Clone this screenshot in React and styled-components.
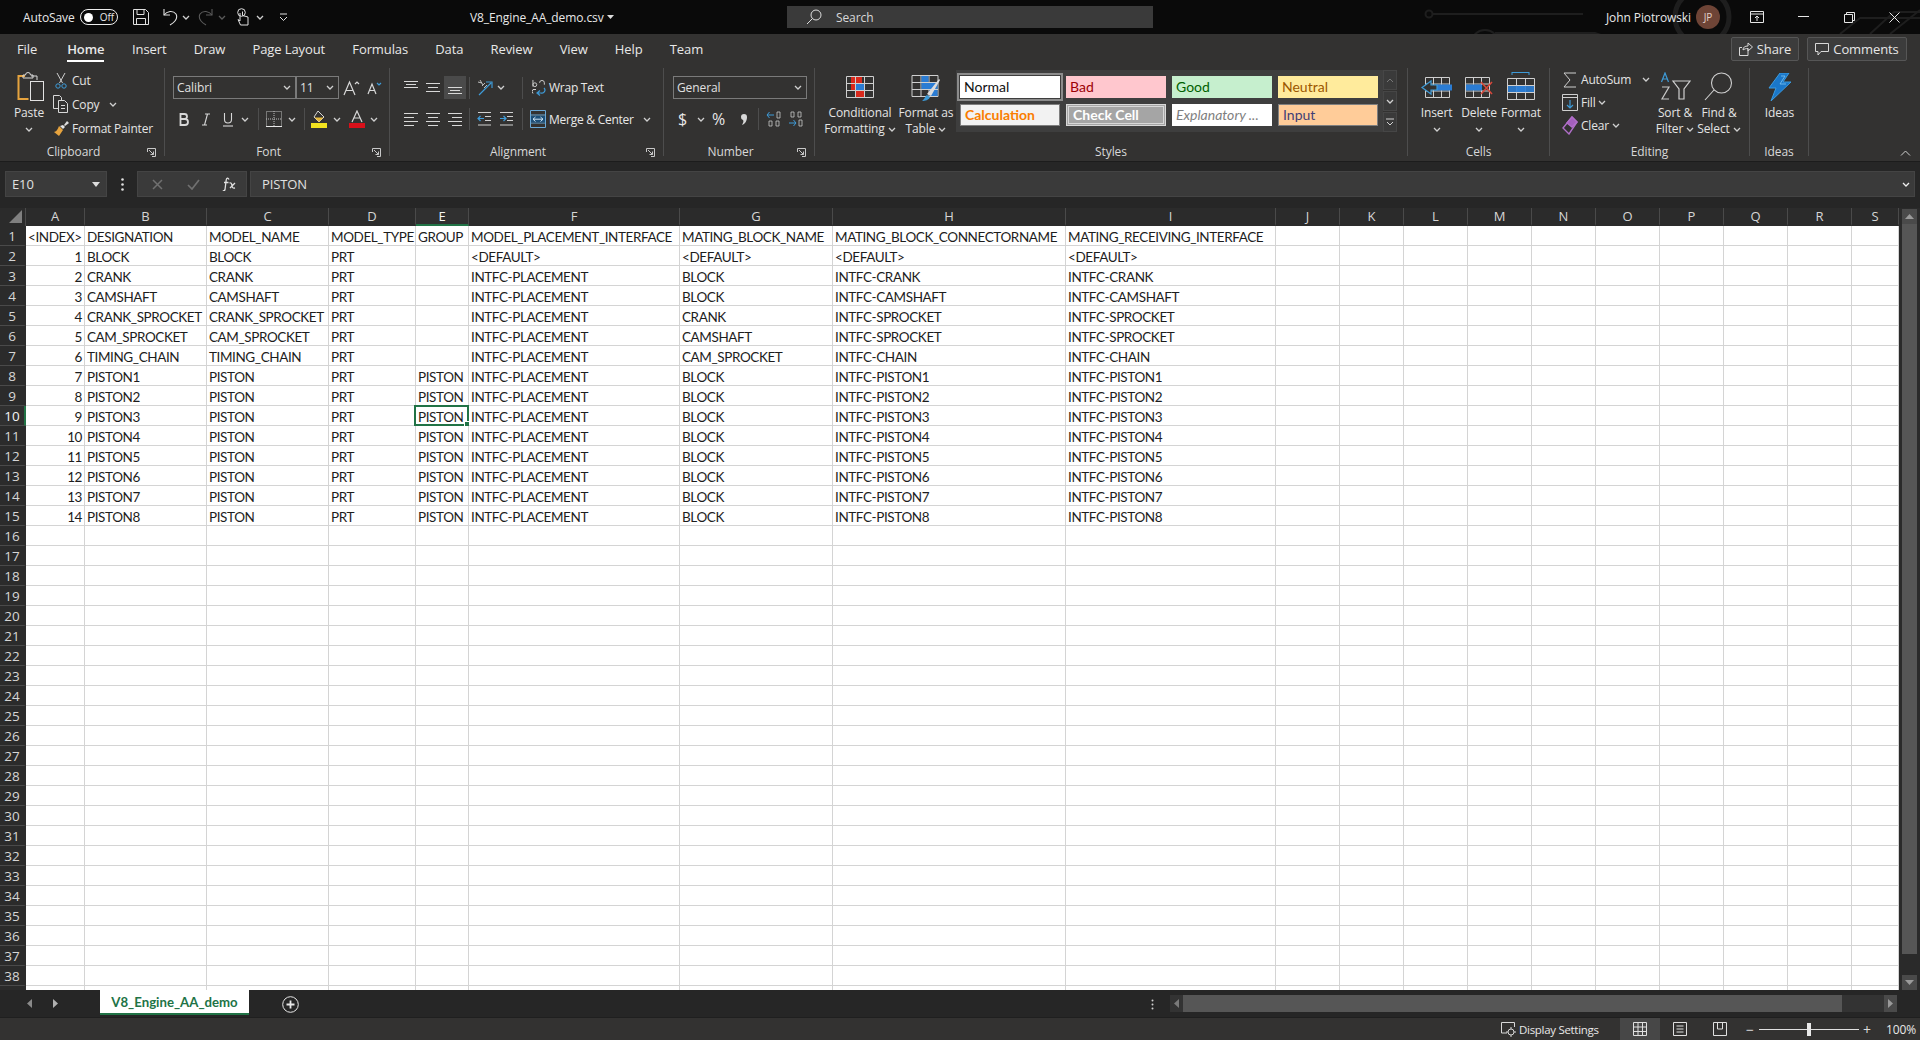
import React from 'react';
import styled, { createGlobalStyle } from 'styled-components';

const UI_FONT = '"Open Sans", "Noto Sans", sans-serif';
const CELL_FONT = 'Lato, "Liberation Sans", sans-serif';

const GlobalStyle = createGlobalStyle`
  html, body { margin: 0; padding: 0; background: #333231; }
  body { font-family: ${UI_FONT}; color: #e6e6e6; }
  * { box-sizing: border-box; }
  svg { display: block; flex: none; }
`;

const Page = styled.div`
  width: 1920px;
  height: 1040px;
  display: flex;
  flex-direction: column;
  overflow: hidden;
`;

/* title bar */
const TitleBar = styled.div`
  position: relative;
  height: 34px;
  flex: none;
  display: flex;
  align-items: center;
  padding-left: 23px;
  background: #0a0a0a;
  font-size: 12px;
  letter-spacing: -0.1px;
  overflow: hidden;
`;
const TitleArt = styled.svg`
  position: absolute;
  left: 1400px;
  top: 0;
`;
const TitleText = styled.span`
  position: relative;
  flex: none;
  width: ${p => p.$w}px;
  margin-left: ${p => p.$ml || 0}px;
  font-size: ${p => p.$fs || 12}px;
  letter-spacing: -0.1px;
  white-space: nowrap;
  color: #e8e8e8;
`;
const Toggle = styled.div`
  position: relative;
  flex: none;
  width: 38px;
  height: 16px;
  border: 1px solid #eee;
  border-radius: 8px;
  display: flex;
  align-items: center;
  padding: 0 3px 0 3px;
  justify-content: space-between;
  font-size: 10px;
  line-height: 1;
  &::before {
    content: '';
    width: 9px;
    height: 9px;
    border-radius: 50%;
    background: #fff;
  }
`;
const Slot = styled.div`
  position: relative;
  flex: none;
  width: ${p => p.$w}px;
  margin-left: ${p => p.$ml || 0}px;
  display: flex;
  align-items: center;
  justify-content: center;
`;
const SearchBox = styled.div`
  position: relative;
  flex: none;
  width: 366px;
  height: 22px;
  margin-left: ${p => p.$ml}px;
  background: #3a3a3a;
  display: flex;
  align-items: center;
  gap: 14px;
  padding-left: 19px;
  color: #d8d8d8;
`;
const Avatar = styled.div`
  position: relative;
  flex: none;
  width: 24px;
  height: 24px;
  margin-left: 11px;
  border-radius: 50%;
  background: #6e4436;
  color: #e0cfc8;
  font-size: 10px;
  display: flex;
  align-items: center;
  justify-content: center;
`;

/* ribbon */
const Ribbon = styled.div`
  height: 128px;
  flex: none;
  background: #333231;
  border-bottom: 1px solid #1c1c1c;
`;
const TabRow = styled.div`
  height: 32px;
  display: flex;
  align-items: flex-start;
  padding: 7px 13px 0 12px;
`;
const RibbonTab = styled.div`
  position: relative;
  height: 21px;
  padding: 0 ${p => p.$pad || 13.6}px;
  margin-left: ${p => p.$ml || 0}px;
  font-size: 13px;
  line-height: 17px;
  letter-spacing: -0.1px;
  color: #e8e8e8;
  font-weight: ${p => (p.$active ? 600 : 400)};
  &::after {
    content: '';
    display: ${p => (p.$active ? 'block' : 'none')};
    position: absolute;
    left: 14px;
    right: 14px;
    bottom: 0;
    height: 2px;
    background: #fff;
  }
`;
const TopButtons = styled.div`
  margin-left: auto;
  display: flex;
  gap: 8px;
  margin-top: -4px;
`;
const TopButton = styled.div`
  width: ${p => p.$w}px;
  height: 24px;
  background: #3c3c3c;
  border: 1px solid #565656;
  border-radius: 2px;
  display: flex;
  align-items: center;
  justify-content: center;
  gap: 4px;
  font-size: 13px;
  letter-spacing: -0.1px;
`;
const Groups = styled.div`
  display: flex;
  margin-top: 2px;
`;
const Group = styled.div`
  width: ${p => p.$w}px;
  height: 88px;
  flex: none;
  display: flex;
  flex-direction: column;
  border-right: ${p => (p.$last ? 'none' : '1px solid #4d4d4d')};
`;
const GroupBody = styled.div`
  height: 76px;
  display: flex;
  flex-direction: ${p => (p.$column ? 'column' : 'row')};
  padding-top: ${p => (p.$column ? 8 : 0)}px;
`;
const GroupLabel = styled.div`
  height: 12px;
  display: flex;
  font-size: 12px;
  line-height: 16px;
  color: #d8d8d8;
  letter-spacing: -0.1px;
`;
const LabelText = styled.span`
  flex: 1;
  text-align: center;
  white-space: nowrap;
`;
const Launcher = styled.span`
  width: 17px;
  flex: none;
  padding-top: 4px;
`;
const Row = styled.div`
  display: flex;
  align-items: center;
  height: ${p => p.$h || 24}px;
  padding-left: ${p => p.$pl || 0}px;
  margin-bottom: ${p => p.$mb || 0}px;
`;
const Divider = styled.div`
  flex: none;
  width: 1px;
  height: 22px;
  background: #4d4d4d;
  margin-left: ${p => p.$ml || 0}px;
  margin-right: ${p => p.$mr || 0}px;
`;
const Combo = styled.div`
  flex: none;
  width: ${p => p.$w}px;
  height: 23px;
  border: 1px solid #7a7a7a;
  margin-left: ${p => p.$ml || 0}px;
  display: flex;
  align-items: center;
  justify-content: space-between;
  padding: 0 4px 0 3px;
  font-size: 12px;
  letter-spacing: -0.1px;
  color: #e0e0e0;
`;
const ToolSlot = styled(Slot)`
  height: 23px;
  background: ${p => (p.$on ? '#4a4a4a' : 'transparent')};
`;
const ToolLabel = styled(TitleText)`
  letter-spacing: -0.25px;
`;
const TallButton = styled.div`
  flex: none;
  width: ${p => p.$w}px;
  margin-left: ${p => p.$ml || 0}px;
  display: flex;
  flex-direction: column;
  align-items: center;
  font-size: 12px;
  line-height: 16px;
  letter-spacing: -0.1px;
  color: #e4e4e4;
`;
const TallIcon = styled.div`
  height: 37px;
  display: flex;
  align-items: center;
  justify-content: center;
  margin-left: ${p => p.$ml || 0}px;
`;
const Line = styled.div`
  height: 16px;
  display: flex;
  align-items: center;
  gap: 3px;
  white-space: nowrap;
`;
const SmallColumn = styled.div`
  flex: none;
  width: ${p => p.$w}px;
  margin-left: ${p => p.$ml || 0}px;
  display: flex;
  flex-direction: column;
`;
const SmallRow = styled.div`
  height: ${p => p.$h || 24}px;
  display: flex;
  align-items: center;
  font-size: 12px;
  letter-spacing: -0.2px;
  color: #e4e4e4;
  white-space: nowrap;
`;
const SmallIcon = styled.div`
  width: 16px;
  flex: none;
  margin-right: 3px;
  display: flex;
  justify-content: center;
`;
const Caret = styled.div`
  margin-left: ${p => p.$ml || 0}px;
`;
const Gallery = styled.div`
  flex: none;
  width: 427px;
  height: 62px;
  margin: 2px 0 0 9px;
  padding: 6px 0 0 4px;
  background: #3e3e3e;
  display: grid;
  grid-template-columns: repeat(4, 100px);
  grid-template-rows: 22px 22px;
  gap: 6px;
`;
const StyleCell = styled.div`
  display: flex;
  align-items: center;
  padding: 0 0 2px 4px;
  font-family: ${CELL_FONT};
  font-size: 14px;
  white-space: nowrap;
  overflow: hidden;
  background: ${p => p.$bg};
  color: ${p => p.$fg};
  font-weight: ${p => (p.$bold ? 700 : 400)};
  font-style: ${p => (p.$italic ? 'italic' : 'normal')};
  border: ${p => p.$border || 'none'};
  outline: ${p => (p.$picked ? '2px solid #8c8c8c' : 'none')};
  outline-offset: 1px;
`;
const GalleryScroll = styled.div`
  flex: none;
  width: 14px;
  height: 62px;
  margin-top: 2px;
  display: flex;
  flex-direction: column;
  gap: 1px;
`;
const GalleryButton = styled.div`
  flex: 1;
  background: #3a3a3a;
  border: 1px solid #464646;
  display: flex;
  align-items: center;
  justify-content: center;
`;
const Collapse = styled.div`
  flex: 1;
  display: flex;
  justify-content: flex-end;
  align-items: flex-end;
  padding: 0 9px 0 0;
`;

/* formula bar */
const FormulaBar = styled.div`
  height: 46px;
  flex: none;
  background: #262626;
  display: flex;
  align-items: flex-start;
  padding: 9px 5px 0 5px;
  font-size: 13px;
  letter-spacing: -0.1px;
  color: #e0e0e0;
`;
const NameBox = styled.div`
  width: 102px;
  height: 26px;
  flex: none;
  background: #3a3a3a;
  border: 1px solid #444;
  display: flex;
  align-items: center;
  justify-content: space-between;
  padding: 0 6px;
`;
const Kebab = styled.div`
  width: 30px;
  height: 26px;
  flex: none;
  display: flex;
  align-items: center;
  justify-content: center;
`;
const FxBox = styled.div`
  width: 110px;
  height: 26px;
  flex: none;
  background: #3a3a3a;
  border: 1px solid #444;
  display: grid;
  grid-template-columns: 36px 36px 36px;
  padding-left: 1px;
  align-items: center;
  justify-items: center;
`;
const FormulaInput = styled.div`
  flex: 1;
  height: 26px;
  margin-left: 3px;
  background: #3a3a3a;
  border: 1px solid #444;
  display: flex;
  align-items: center;
  justify-content: space-between;
  padding: 0 4px 0 11px;
`;

/* sheet */
const SheetArea = styled.div`
  height: 782px;
  flex: none;
  display: flex;
  background: #262626;
`;
const Sheet = styled.div`
  width: 1899px;
  height: 782px;
  flex: none;
  overflow: hidden;
  display: grid;
  grid-template-columns: 26px 59px 122px 122px 87px 53px 211px 153px 233px 210px repeat(9, 64px) 47px;
  grid-template-rows: 18px;
  grid-auto-rows: 20px;
`;
const Corner = styled.div`
  background: #2b2b2b;
  border-right: 1px solid #4a4a4a;
  display: flex;
  align-items: flex-end;
  justify-content: flex-end;
  padding: 0 3px 3px 0;
`;
const ColHead = styled.div`
  background: ${p => (p.$sel ? '#303030' : '#2b2b2b')};
  border-right: 1px solid #4a4a4a;
  border-bottom: 2px solid ${p => (p.$sel ? '#217346' : '#2b2b2b')};
  display: flex;
  align-items: center;
  justify-content: center;
  padding-top: 1px;
  font-size: 13px;
  line-height: 1;
  color: ${p => (p.$sel ? '#f4f4f4' : '#d6d6d6')};
`;
const RowHead = styled.div`
  background: ${p => (p.$sel ? '#303030' : '#2b2b2b')};
  border-bottom: 1px solid #4a4a4a;
  border-right: 2px solid ${p => (p.$sel ? '#217346' : '#2b2b2b')};
  display: flex;
  align-items: center;
  justify-content: center;
  font-size: 13.5px;
  color: ${p => (p.$sel ? '#f4f4f4' : '#d6d6d6')};
`;
const Cell = styled.div`
  position: relative;
  background: #fff;
  border-right: 1px solid #d4d4d4;
  border-bottom: 1px solid #d4d4d4;
  font-family: ${CELL_FONT};
  font-size: 13.5px;
  letter-spacing: -0.4px;
  line-height: 23px;
  color: #1d1d1d;
  padding: 0 ${p => (p.$num ? 2 : 1)}px 0 2px;
  text-align: ${p => (p.$num ? 'right' : 'left')};
  white-space: nowrap;
  &::before {
    content: '';
    display: ${p => (p.$sel ? 'block' : 'none')};
    position: absolute;
    left: -2px;
    top: -1px;
    right: -1px;
    bottom: -1px;
    border: 2px solid #217346;
  }
  &::after {
    content: '';
    display: ${p => (p.$sel ? 'block' : 'none')};
    position: absolute;
    right: -3px;
    bottom: -3px;
    width: 5px;
    height: 5px;
    background: #217346;
    border: 1px solid #fff;
  }
`;
const VScroll = styled.div`
  flex: 1;
  display: flex;
  flex-direction: column;
  align-items: center;
  padding-top: 1px;
  background: #2a2a2a;
`;
const ScrollButton = styled.div`
  width: 15px;
  height: 15px;
  flex: none;
  background: #4a4a4a;
  display: flex;
  align-items: center;
  justify-content: center;
`;
const VThumb = styled.div`
  width: 15px;
  height: 730px;
  flex: none;
  background: #565656;
  margin-bottom: auto;
`;

/* sheet tabs */
const TabBar = styled.div`
  height: 28px;
  flex: none;
  display: flex;
  background: #262626;
  border-bottom: 1px solid #1f1f1f;
`;
const SheetNav = styled.div`
  width: 100px;
  flex: none;
  display: flex;
  padding: 9px 0 0 27px;
  gap: 21px;
`;
const SheetTab = styled.div`
  width: 149px;
  height: 25px;
  flex: none;
  background: #fff;
  border-bottom: 2px solid #217346;
  color: #217346;
  font-family: ${CELL_FONT};
  font-weight: 700;
  font-size: 13.2px;
  display: flex;
  align-items: center;
  justify-content: center;
`;
const AddSheet = styled.div`
  margin: 6px 0 0 33px;
  flex: none;
`;
const TabDots = styled.div`
  margin: 9px 0 0 845px;
  width: 16px;
  flex: none;
  display: flex;
  justify-content: center;
`;
const HScroll = styled.div`
  width: 727px;
  height: 17px;
  margin: 5px 0 0 10px;
  flex: none;
  display: flex;
  align-items: center;
  background: #333;
`;
const HStart = styled.div`
  width: 13px;
  height: 100%;
  flex: none;
  display: flex;
  align-items: center;
  justify-content: center;
`;
const HThumb = styled.div`
  width: 659px;
  height: 100%;
  background: #565656;
`;
const HEnd = styled.div`
  margin-left: auto;
  width: 13px;
  height: 100%;
  background: #4a4a4a;
  display: flex;
  align-items: center;
  justify-content: center;
`;

/* status bar */
const StatusBar = styled.div`
  height: 22px;
  flex: none;
  background: #333231;
  display: flex;
  align-items: center;
  justify-content: flex-end;
  font-size: 12px;
  letter-spacing: -0.1px;
  color: #dcdcdc;
`;
const StatusText = styled(TitleText)`
  letter-spacing: -0.3px;
`;
const ViewButton = styled.div`
  width: 40px;
  height: 22px;
  flex: none;
  background: ${p => (p.$on ? '#474747' : 'transparent')};
  display: flex;
  align-items: center;
  justify-content: center;
`;
const ZoomSlider = styled.div`
  position: relative;
  width: 100px;
  height: 1px;
  flex: none;
  background: #e0e0e0;
  margin: 0 3px 0 4px;
  &::after {
    content: '';
    position: absolute;
    left: 48px;
    top: -6px;
    width: 4px;
    height: 13px;
    background: #e8e8e8;
  }
`;
const ZoomSign = styled.span`
  font-size: 14px;
  width: 10px;
  text-align: center;
  flex: none;
`;

const C = '#d8d8d8';
const BLUE = '#2b7cd3';
const LBLUE = '#3e9bd8';
const RED = '#d9291c';

const Chev = ({ color = '#d0d0d0' }) => (
  <svg width="8" height="5" viewBox="0 0 8 5"><path d="M1 1l3 3 3-3" fill="none" stroke={color} strokeWidth="1.3" /></svg>
);
const Launch = () => (
  <svg width="9" height="9" viewBox="0 0 9 9" fill="none" stroke="#c8c8c8"><path d="M.5 4V.5H8.5V8.5H5" /><path d="M2 2l4.5 4.5M6.5 3.5v3h-3" /></svg>
);
const Lines = ({ rows }) => (
  <svg width="16" height="15" viewBox="0 0 16 15" stroke={C}>
    {rows.map(([y, x1, x2]) => <path key={y} d={`M${x1} ${y}.5H${x2}`} />)}
  </svg>
);
const AT = [[1, 1, 15], [4, 3, 13], [7, 1, 15]];
const AM = [[3, 1, 15], [7, 3, 13], [11, 1, 15]];
const AB = [[7, 1, 15], [10, 3, 13], [13, 1, 15]];
const HL = [[1, 1, 15], [5, 1, 11], [9, 1, 15], [13, 1, 11]];
const HC = [[1, 1, 15], [5, 3, 13], [9, 1, 15], [13, 3, 13]];
const HR = [[1, 1, 15], [5, 5, 15], [9, 1, 15], [13, 5, 15]];

const PasteIcon = () => (
  <svg width="28" height="30" viewBox="0 0 28 30" fill="none">
    <path d="M8 4H1.500v23h10" stroke="#e6a33e" strokeWidth="2" />
    <path d="M14 4h6v4" stroke="#d8d8d8" />
    <path d="M6 6V3h2.500a2.500 2.500 0 0 1 5 0H16v3z" stroke="#d8d8d8" />
    <rect x="13.500" y="9.500" width="13" height="19" stroke="#e2e2e2" fill="#333231" />
  </svg>
);
const ScissorsIcon = () => (
  <svg width="12" height="17" viewBox="0 0 12 17" fill="none">
    <path d="M2 1l5.500 10M10 1L4.500 11" stroke="#cfcfcf" />
    <circle cx="3" cy="14" r="2.200" stroke={LBLUE} /><circle cx="9" cy="14" r="2.200" stroke={LBLUE} />
  </svg>
);
const CopyIcon = () => (
  <svg width="16" height="18" viewBox="0 0 16 18" fill="none" stroke="#d8d8d8">
    <path d="M5 13.500H.5V.5h6l2 2V5" /><path d="M5.500 5.500h6l3 3v9h-9z" /><path d="M8 10.500h4M8 13.500h4" />
  </svg>
);
const BrushIcon = () => (
  <svg width="17" height="17" viewBox="0 0 17 17" fill="none">
    <path d="M11 5l3-4 2 2-4 3z" fill="#ddd" />
    <path d="M10 5l2 2-2 2-3-3z" fill="#e6e6e6" />
    <path d="M6 6l4 4-4 6-5-4c2 0 4-3 5-6z" fill="#e6a33e" />
  </svg>
);
const BorderIcon = () => (
  <svg width="16" height="16" viewBox="0 0 16 16" fill="none" stroke="#bdbdbd" strokeDasharray="1 1">
    <path d="M.5.500h15v15H.5zM8 0v16M0 8h16" /><path d="M0 15.500h16" stroke="#e8e8e8" strokeDasharray="none" />
  </svg>
);
const FillIcon = () => (
  <svg width="16" height="18" viewBox="0 0 16 18">
    <path d="M7 1l6 6-5 5-5-5z" fill="none" stroke="#d8d8d8" />
    <path d="M3.500 7.500h9L8 12z" fill="#e8b93a" />
    <rect y="13" width="16" height="5" fill="#f2e21f" />
  </svg>
);
const FontColorIcon = () => (
  <svg width="16" height="18" viewBox="0 0 16 18" fill="none">
    <path d="M3 12L8 1l5 11M5 8h6" stroke="#d8d8d8" strokeWidth="1.2" />
    <rect y="13" width="16" height="5" fill="#d9101a" />
  </svg>
);
const OrientationIcon = () => (
  <svg width="16" height="17" viewBox="0 0 16 17" fill="none">
    <path d="M1 3l4 1M3 1l3 5M5 7l3-3M7 9l3-3" stroke="#bdbdbd" />
    <path d="M2 16L14 4M9 3h6v6" stroke={LBLUE} strokeWidth="1.2" />
  </svg>
);
const WrapIcon = () => (
  <svg width="14" height="18" viewBox="0 0 14 18" fill="none">
    <path d="M1 1v7M1 6a2 2 0 1 1 4 0 2 2 0 1 1-4 0M8 4a2 2 0 1 1 5 0v2" stroke="#d0d0d0" transform="scale(.95)" />
    <path d="M12 9a3 3 0 0 1-3 5H6M8 11.500L5 14l3 2.500" stroke={LBLUE} strokeWidth="1.200" />
    <path d="M4 10.500H1a3 3 0 0 0 0 4" stroke="#d0d0d0" />
  </svg>
);
const IndentIcon = ({ right }) => (
  <svg width="15" height="14" viewBox="0 0 15 14" fill="none">
    <path d="M1 .5h13M8 4.500h6M8 8.500h6M1 13h13" stroke="#d0d0d0" />
    <path d={right ? 'M1 6.500h6M4.500 4l2.500 2.500L4.500 9' : 'M7 6.500H1M3.500 4L1 6.500 3.500 9'} stroke={LBLUE} strokeWidth="1.200" />
  </svg>
);
const MergeIcon = () => (
  <svg width="16" height="18" viewBox="0 0 16 18" fill="none">
    <path d="M.5.500h15v17H.5zM.5 5h15M.5 13h15" stroke="#6aa9d8" />
    <path d="M1 6h14v6.500H1z" fill="#1d4f78" />
    <path d="M3 9.200h10M5.500 7L3 9.200l2.500 2.300M10.500 7L13 9.200l-2.500 2.300" stroke="#cfe4f4" />
  </svg>
);
const IncDec = ({ inc }) => (
  <svg width="16" height="16" viewBox="0 0 16 16" fill="none">
    {inc ? <path d="M8 4H1M3.500 1L1 4l2.500 3" stroke={LBLUE} /> : <path d="M1 12h7M5.500 9L8 12l-2.500 3" stroke={LBLUE} />}
    <path d={inc ? 'M11 1h3v6h-3zM3 10h3v5H3zM10 10h3v5h-3z' : 'M3 1h3v5H3zM10 1h3v5h-3zM11 9h3v6h-3z'} stroke="#c8c8c8" strokeWidth=".8" />
  </svg>
);
const Table = ({ children }) => (
  <svg width="30" height="26" viewBox="0 0 30 26" fill="none">
    {children}
    <path d="M1.500 2.500h27v21h-27zM1.500 9.500h27M1.500 16.500h27M10.500 2.500v21M19.500 2.500v21" stroke="#cfcfcf" />
  </svg>
);
const CondIcon = () => (
  <Table>
    <path d="M6 3h11v6H6zM10 17h9v6h-9z" fill={RED} /><path d="M10 10h9v6h-9z" fill={BLUE} /><path d="M6 10h4v6H6z" fill={RED} />
  </Table>
);
const TableFmtIcon = () => (
  <svg width="30" height="30" viewBox="0 0 30 30" fill="none">
    <path d="M1 3.500h26v21H1zM1 10.500h26M1 17.500h26M10 3.500v21M18 3.500v21" stroke="#cfcfcf" />
    <path d="M10.500 4h7v6h-7zM10.500 11h16v6h-16zM18.500 18h8v6h-8z" fill={BLUE} />
    <path d="M16 22L28 7l1 1-9 16z" fill="#dcdcdc" />
    <path d="M11 29c3 0 7-1 8-4l-3-2c-2 1-2 4-5 6z" fill="#3d9ad6" />
  </svg>
);
const InsertIcon = () => (
  <svg width="32" height="26" viewBox="0 0 32 26" fill="none">
    <path d="M4.500 3.500h24v20h-24zM4.500 10h24M4.500 17h24M12.500 3.500v20M20.500 3.500v20" stroke="#cfcfcf" />
    <path d="M13 10.500h18v6H13z" fill={BLUE} />
    <path d="M10 7l-9 6.500 9 6.500v-4h6v-5h-6z" fill="#333231" stroke={LBLUE} strokeWidth="1.200" />
  </svg>
);
const DeleteIcon = () => (
  <svg width="30" height="26" viewBox="0 0 30 26" fill="none">
    <path d="M1.500 3.500h24v20h-24zM1.500 10h24M1.500 17h24M9.500 3.500v20M17.500 3.500v20" stroke="#cfcfcf" />
    <path d="M2 10.500h16v6H2z" fill={BLUE} />
    <path d="M17 8l11 12M28 8L17 20" stroke="#d8473a" strokeWidth="1.600" />
  </svg>
);
const FormatIcon = () => (
  <svg width="30" height="30" viewBox="0 0 30 30" fill="none">
    <path d="M6 .5h17M6 0v3M23 0v3" stroke={LBLUE} />
    <path d="M1.500 6.500h27v21h-27zM1.500 13.500h27M1.500 20.500h27M10.500 6.500v21M19.500 6.500v21" stroke="#cfcfcf" />
    <path d="M11 14h8v6h-8z" fill={BLUE} /><path d="M2 14h9v6H2zM19 14h9v6h-9z" fill={BLUE} opacity=".9" />
  </svg>
);
const FillDownIcon = () => (
  <svg width="16" height="17" viewBox="0 0 16 17" fill="none">
    <path d="M.5 .5h15v16H.5zM.5 3.500h15" stroke="#d0d0d0" />
    <path d="M8 6v8M5 11l3 3 3-3" stroke={LBLUE} strokeWidth="1.200" />
  </svg>
);
const EraserIcon = () => (
  <svg width="16" height="19" viewBox="0 0 16 19" fill="none" stroke="#b06ec8" strokeWidth="1.400">
    <path d="M10 1l5 5-8 12-6-6z" /><path d="M10 1l5 5-5 5-5-4z" fill="#a45fbd" />
  </svg>
);
const SortFilterIcon = () => (
  <svg width="31" height="29" viewBox="0 0 31 29" fill="none">
    <path d="M1.500 10L5 1l3.500 9M2.700 7H7.300" stroke={LBLUE} strokeWidth="1.200" />
    <path d="M2 15h7L2 27h7" stroke="#c8c8c8" strokeWidth="1.200" />
    <path d="M13 9h17l-6 8v10h-5V17z" stroke="#d0d0d0" strokeWidth="1.200" />
  </svg>
);
const FindIcon = () => (
  <svg width="30" height="29" viewBox="0 0 30 29" fill="none" stroke="#d0d0d0" strokeWidth="1.100">
    <circle cx="17.500" cy="11" r="10" /><path d="M10 18L1 28" />
  </svg>
);
const BoltIcon = () => (
  <svg width="24" height="28" viewBox="0 0 24 28" fill="none">
    <path d="M12 0h9l-6 9h8L3 28l5-13H1z" fill="#1a77c9" stroke="#3b9be0" />
    <path d="M13 3h4l-5 8h6" stroke="#7fc4f0" strokeWidth=".8" />
  </svg>
);
const Qat = {
  save: <svg width="16" height="16" viewBox="0 0 16 16" fill="none" stroke="#e0e0e0"><path d="M.5.500h12l3 3v12H.5z" /><path d="M4 .5v5h7v-5M3.500 15.500v-6h9v6" /></svg>,
  undo: <svg width="15" height="18" viewBox="0 0 15 18" fill="none" stroke="#e0e0e0" strokeWidth="1.100"><path d="M1 1v6h6" /><path d="M1 7c3-4 9-5 12-1 2 4-1 8-6 11" /></svg>,
  redo: <svg width="15" height="18" viewBox="0 0 15 18" fill="none" stroke="#5a5a5a" strokeWidth="1.100"><path d="M14 1v6H8" /><path d="M14 7c-3-4-9-5-12-1-2 4 1 8 6 11" /></svg>,
  touch: <svg width="12" height="18" viewBox="0 0 12 18" fill="none" stroke="#e0e0e0"><circle cx="4.500" cy="4.500" r="3.800" /><path d="M3 5v8L1 11.500 3.500 17H11V9L5.500 7.500V3.500" /></svg>,
  more: <svg width="9" height="9" viewBox="0 0 9 9" fill="none" stroke="#e0e0e0"><path d="M1 1h7M1 4l3.500 3.500L8 4" /></svg>,
};
const Caption = {
  ribbon: <svg width="14" height="12" viewBox="0 0 14 12" fill="none" stroke="#e6e6e6"><path d="M.5 .5h13v11H.5zM.5 3h13M7 10V5M5 7l2-2 2 2" /></svg>,
  min: <svg width="11" height="2" viewBox="0 0 11 2" stroke="#e6e6e6"><path d="M0 .5h11" /></svg>,
  max: <svg width="11" height="11" viewBox="0 0 11 11" fill="none" stroke="#e6e6e6"><path d="M.5 2.500h8v8h-8zM2.500 2.500v-2h8v8h-2" /></svg>,
  close: <svg width="11" height="11" viewBox="0 0 11 11" stroke="#e6e6e6"><path d="M.5.500l10 10M10.500.500l-10 10" /></svg>,
};

const HEADS = ['A', 'B', 'C', 'D', 'E', 'F', 'G', 'H', 'I', 'J', 'K', 'L', 'M', 'N', 'O', 'P', 'Q', 'R', 'S'];

const PISTONS = [1, 2, 3, 4, 5, 6, 7, 8].map(n => [
  `PISTON${n}`, 'PISTON', 'PRT', 'PISTON', 'INTFC-PLACEMENT', 'BLOCK', `INTFC-PISTON${n}`, `INTFC-PISTON${n}`,
]);
const DATA = [
  ['<INDEX>', 'DESIGNATION', 'MODEL_NAME', 'MODEL_TYPE', 'GROUP', 'MODEL_PLACEMENT_INTERFACE', 'MATING_BLOCK_NAME', 'MATING_BLOCK_CONNECTORNAME', 'MATING_RECEIVING_INTERFACE'],
  ...[
    ['BLOCK', 'BLOCK', 'PRT', '', '<DEFAULT>', '<DEFAULT>', '<DEFAULT>', '<DEFAULT>'],
    ['CRANK', 'CRANK', 'PRT', '', 'INTFC-PLACEMENT', 'BLOCK', 'INTFC-CRANK', 'INTFC-CRANK'],
    ['CAMSHAFT', 'CAMSHAFT', 'PRT', '', 'INTFC-PLACEMENT', 'BLOCK', 'INTFC-CAMSHAFT', 'INTFC-CAMSHAFT'],
    ['CRANK_SPROCKET', 'CRANK_SPROCKET', 'PRT', '', 'INTFC-PLACEMENT', 'CRANK', 'INTFC-SPROCKET', 'INTFC-SPROCKET'],
    ['CAM_SPROCKET', 'CAM_SPROCKET', 'PRT', '', 'INTFC-PLACEMENT', 'CAMSHAFT', 'INTFC-SPROCKET', 'INTFC-SPROCKET'],
    ['TIMING_CHAIN', 'TIMING_CHAIN', 'PRT', '', 'INTFC-PLACEMENT', 'CAM_SPROCKET', 'INTFC-CHAIN', 'INTFC-CHAIN'],
    ...PISTONS,
  ].map((r, i) => [i + 1, ...r]),
];

const TABS = ['Insert', 'Draw', 'Page Layout', 'Formulas', 'Data', 'Review', 'View', 'Help', 'Team'];

const STYLES = [
  { t: 'Normal', bg: '#fff', fg: '#111', picked: true },
  { t: 'Bad', bg: '#ffc7ce', fg: '#9c0006' },
  { t: 'Good', bg: '#c6efce', fg: '#006100' },
  { t: 'Neutral', bg: '#ffeb9c', fg: '#9c5700' },
  { t: 'Calculation', bg: '#f2f2f2', fg: '#fa7d00', bold: true, border: '1px solid #7f7f7f' },
  { t: 'Check Cell', bg: '#a5a5a5', fg: '#fff', bold: true, border: '3px double #d8d8d8' },
  { t: 'Explanatory ...', bg: '#fff', fg: '#7f7f7f', italic: true },
  { t: 'Input', bg: '#ffcc99', fg: '#3f3f76', border: '1px solid #7f7f7f' },
];

const renderGroupLabel = (text, launcher) => (
  <GroupLabel>
    <LabelText>{text}</LabelText>
    {launcher && <Launcher><Launch /></Launcher>}
  </GroupLabel>
);

const renderTall = (w, icon, lines, ml) => (
  <TallButton $w={w} $ml={ml}>
    <TallIcon>{icon}</TallIcon>
    {lines.map((l, i) => (
      <Line key={i}>{l}{i === lines.length - 1 && <Chev />}</Line>
    ))}
  </TallButton>
);

const Title = () => (
  <TitleBar>
    <TitleArt width="520" height="34" viewBox="0 0 520 34" fill="none" stroke="#1e1e1e" strokeWidth="2">
      <circle cx="29" cy="14" r="3.500" />
      <path d="M33 14h150" />
      <circle cx="302" cy="17" r="27" strokeWidth="5" />
      <circle cx="85" cy="44" r="14" />
      <path d="M95 33h100l30 10" />
      <path d="M440 34l20-16h60M470 34l24-22h26M490 34l30-24" />
    </TitleArt>
    <TitleText $w={57}>AutoSave</TitleText>
    <Toggle>Off</Toggle>
    <Slot $w={16} $ml={15}>{Qat.save}</Slot>
    <Slot $w={15} $ml={14}>{Qat.undo}</Slot>
    <Slot $w={8} $ml={4}><Chev /></Slot>
    <Slot $w={15} $ml={8}>{Qat.redo}</Slot>
    <Slot $w={8} $ml={5}><Chev color="#5a5a5a" /></Slot>
    <Slot $w={12} $ml={11}>{Qat.touch}</Slot>
    <Slot $w={8} $ml={7}><Chev /></Slot>
    <Slot $w={9} $ml={15}>{Qat.more}</Slot>
    <TitleText $w={131} $ml={182}>V8_Engine_AA_demo.csv</TitleText>
    <Slot $w={8} $ml={5}><svg width="7" height="4" viewBox="0 0 7 4"><path d="M0 0h7L3.500 4z" fill="#ddd" /></svg></Slot>
    <SearchBox $ml={173}>
      <svg width="16" height="16" viewBox="0 0 16 16" fill="none" stroke="#dcdcdc"><circle cx="10" cy="6" r="5" /><path d="M6.500 9.500L1 15" /></svg>
      Search
    </SearchBox>
    <TitleText $w={79} $ml={453}>John Piotrowski</TitleText>
    <Avatar>JP</Avatar>
    <Slot $w={14} $ml={30}>{Caption.ribbon}</Slot>
    <Slot $w={11} $ml={34}>{Caption.min}</Slot>
    <Slot $w={11} $ml={35}>{Caption.max}</Slot>
    <Slot $w={11} $ml={34}>{Caption.close}</Slot>
  </TitleBar>
);

const RibbonPanel = () => (
  <Ribbon>
    <TabRow>
      <RibbonTab $pad={5}>File</RibbonTab>
      <RibbonTab $active $pad={14} $ml={11}>Home</RibbonTab>
      {TABS.map(t => <RibbonTab key={t}>{t}</RibbonTab>)}
      <TopButtons>
        <TopButton $w={68}>
          <svg width="14" height="14" viewBox="0 0 14 14" fill="none" stroke="#d8d8d8"><path d="M9 6.500v7H.5v-8H3" /><path d="M4 8c0-3 2-4 5-4V1l4.500 4L9 9V6.500C7 6.500 5 7 4 8z" /></svg>
          Share
        </TopButton>
        <TopButton $w={100}>
          <svg width="14" height="13" viewBox="0 0 14 13" fill="none" stroke="#d8d8d8"><path d="M.5.500h13v8H6L3 12V8.500H.5z" /></svg>
          Comments
        </TopButton>
      </TopButtons>
    </TabRow>
    <Groups>
      <Group $w={165}>
        <GroupBody>
          <TallButton $w={58}>
            <TallIcon $ml={4}><PasteIcon /></TallIcon>
            <Line>Paste</Line>
            <Line><Chev /></Line>
          </TallButton>
          <SmallColumn $w={100} $ml={-5}>
            <SmallRow><SmallIcon><ScissorsIcon /></SmallIcon>Cut</SmallRow>
            <SmallRow><SmallIcon><CopyIcon /></SmallIcon>Copy<Caret $ml={10}><Chev /></Caret></SmallRow>
            <SmallRow><SmallIcon><BrushIcon /></SmallIcon>Format Painter</SmallRow>
          </SmallColumn>
        </GroupBody>
        {renderGroupLabel('Clipboard', true)}
      </Group>

      <Group $w={225}>
        <GroupBody $column>
          <Row $h={23} $pl={8} $mb={8}>
            <Combo $w={123}>Calibri<Chev /></Combo>
            <Combo $w={43}>11<Chev /></Combo>
            <Slot $w={19} $ml={3}><svg width="17" height="16" viewBox="0 0 17 16" fill="none" stroke="#d8d8d8" strokeWidth="1.200"><path d="M1 15L6.500 2 12 15M3 10.500h7M12 4l2-2 2 2" /></svg></Slot>
            <Slot $w={19} $ml={4}><svg width="15" height="14" viewBox="0 0 15 14" fill="none" stroke="#d8d8d8" strokeWidth="1.200"><path d="M1 13L5 3l4 10M2.500 9.500h5" /><path d="M10 2l2 2 2-2" stroke={LBLUE} /></svg></Slot>
          </Row>
          <Row $pl={8}>
            <Slot $w={22}><svg width="10" height="13" viewBox="0 0 10 13" fill="none" stroke="#d8d8d8" strokeWidth="1.800"><path d="M1.500 1h4a2.500 2.500 0 0 1 0 5h-4zM1.500 6h4.500a2.800 2.800 0 0 1 0 6h-4.500z" /></svg></Slot>
            <Slot $w={22}><svg width="8" height="13" viewBox="0 0 8 13" fill="none" stroke="#d8d8d8" strokeWidth="1.100"><path d="M3 1h5M0 12h5M5.500 1L2.500 12" /></svg></Slot>
            <Slot $w={21}><svg width="10" height="15" viewBox="0 0 10 15" fill="none" stroke="#d8d8d8" strokeWidth="1.100"><path d="M1.500 1v6.500a3.500 3.500 0 0 0 7 0V1" /><path d="M0 14h10" /></svg></Slot>
            <Slot $w={14}><Chev /></Slot>
            <Divider $ml={6} />
            <Slot $w={29}><BorderIcon /></Slot>
            <Slot $w={8}><Chev /></Slot>
            <Divider $ml={8} />
            <Slot $w={28}><FillIcon /></Slot>
            <Slot $w={8}><Chev /></Slot>
            <Slot $w={24} $ml={4}><FontColorIcon /></Slot>
            <Slot $w={8} $ml={1}><Chev /></Slot>
          </Row>
        </GroupBody>
        {renderGroupLabel('Font', true)}
      </Group>

      <Group $w={274}>
        <GroupBody $column>
          <Row $h={23} $pl={10} $mb={8}>
            <ToolSlot $w={22}><Lines rows={AT} /></ToolSlot>
            <ToolSlot $w={22}><Lines rows={AM} /></ToolSlot>
            <ToolSlot $w={22} $on><Lines rows={AB} /></ToolSlot>
            <Divider $ml={3} $mr={3} />
            <Slot $w={24}><OrientationIcon /></Slot>
            <Slot $w={8}><Chev /></Slot>
            <Divider $ml={17} $mr={9} />
            <Slot $w={14}><WrapIcon /></Slot>
            <ToolLabel $w={70} $ml={3}>Wrap Text</ToolLabel>
          </Row>
          <Row $pl={10}>
            <ToolSlot $w={22}><Lines rows={HL} /></ToolSlot>
            <ToolSlot $w={22}><Lines rows={HC} /></ToolSlot>
            <ToolSlot $w={22}><Lines rows={HR} /></ToolSlot>
            <Divider $ml={3} $mr={3} />
            <Slot $w={22}><IndentIcon /></Slot>
            <Slot $w={22}><IndentIcon right /></Slot>
            <Divider $ml={5} $mr={7} />
            <Slot $w={16}><MergeIcon /></Slot>
            <ToolLabel $w={94} $ml={3}>Merge &amp; Center</ToolLabel>
            <Slot $w={8}><Chev /></Slot>
          </Row>
        </GroupBody>
        {renderGroupLabel('Alignment', true)}
      </Group>

      <Group $w={151}>
        <GroupBody $column>
          <Row $h={23} $pl={9} $mb={8}>
            <Combo $w={134}>General<Chev /></Combo>
          </Row>
          <Row $pl={9}>
            <Slot $w={20}><TitleText $w={10} $fs={16}>$</TitleText></Slot>
            <Slot $w={8} $ml={4}><Chev /></Slot>
            <Slot $w={32}><TitleText $w={18} $fs={16}>%</TitleText></Slot>
            <Slot $w={14}><svg width="8" height="13" viewBox="0 0 8 13"><path d="M1 4a3 3 0 1 1 6 0c0 4-2 7-5 8 1-2 2-4 1-5a3 3 0 0 1-2-3z" fill="#d8d8d8" /></svg></Slot>
            <Divider $ml={7} />
            <Slot $w={20} $ml={5}><IncDec inc /></Slot>
            <Slot $w={22} $ml={1}><IncDec /></Slot>
          </Row>
        </GroupBody>
        {renderGroupLabel('Number', true)}
      </Group>

      <Group $w={593}>
        <GroupBody>
          {renderTall(90, <CondIcon />, ['Conditional', 'Formatting'])}
          {renderTall(42, <TableFmtIcon />, ['Format as', 'Table'])}
          <Gallery>
            {STYLES.map(s => (
              <StyleCell key={s.t} $bg={s.bg} $fg={s.fg} $bold={s.bold} $italic={s.italic} $border={s.border} $picked={s.picked}>{s.t}</StyleCell>
            ))}
          </Gallery>
          <GalleryScroll>
            <GalleryButton><svg width="8" height="5" viewBox="0 0 8 5"><path d="M1 4l3-3 3 3" fill="none" stroke="#777" /></svg></GalleryButton>
            <GalleryButton><Chev /></GalleryButton>
            <GalleryButton><svg width="8" height="9" viewBox="0 0 8 9" fill="none" stroke="#d0d0d0"><path d="M0 1h8M1 4l3 3 3-3" /></svg></GalleryButton>
          </GalleryScroll>
        </GroupBody>
        {renderGroupLabel('Styles')}
      </Group>

      <Group $w={142}>
        <GroupBody>
          {renderTall(43, <InsertIcon />, ['Insert', ''], 7)}
          {renderTall(42, <DeleteIcon />, ['Delete', ''])}
          {renderTall(42, <FormatIcon />, ['Format', ''])}
        </GroupBody>
        {renderGroupLabel('Cells')}
      </Group>

      <Group $w={200}>
        <GroupBody>
          <SmallColumn $w={90} $ml={12}>
            <SmallRow $h={23}>
              <SmallIcon><svg width="14" height="16" viewBox="0 0 14 16" fill="none" stroke="#cfcfcf"><path d="M13 1H1l6 7-6 7h12" /></svg></SmallIcon>
              AutoSum<Caret $ml={11}><Chev /></Caret>
            </SmallRow>
            <SmallRow $h={23}><SmallIcon><FillDownIcon /></SmallIcon>Fill<Caret $ml={3}><Chev /></Caret></SmallRow>
            <SmallRow $h={23}><SmallIcon><EraserIcon /></SmallIcon>Clear<Caret $ml={3}><Chev /></Caret></SmallRow>
          </SmallColumn>
          {renderTall(46, <SortFilterIcon />, ['Sort &', 'Filter'])}
          {renderTall(42, <FindIcon />, ['Find &', 'Select'])}
        </GroupBody>
        {renderGroupLabel('Editing')}
      </Group>

      <Group $w={59}>
        <GroupBody>
          <TallButton $w={59}>
            <TallIcon><BoltIcon /></TallIcon>
            <Line>Ideas</Line>
          </TallButton>
        </GroupBody>
        {renderGroupLabel('Ideas')}
      </Group>

      <Collapse>
        <svg width="11" height="6" viewBox="0 0 11 6" fill="none" stroke="#cfcfcf"><path d="M1 5.500l4.500-4.500 4.500 4.500" /></svg>
      </Collapse>
    </Groups>
  </Ribbon>
);

const Formula = () => (
  <FormulaBar>
    <NameBox>E10<svg width="8" height="5" viewBox="0 0 8 5"><path d="M0 0h8L4 5z" fill="#ddd" /></svg></NameBox>
    <Kebab><svg width="3" height="13" viewBox="0 0 3 13" fill="#e0e0e0"><circle cx="1.500" cy="1.500" r="1.300" /><circle cx="1.500" cy="6.500" r="1.300" /><circle cx="1.500" cy="11.500" r="1.300" /></svg></Kebab>
    <FxBox>
      <svg width="11" height="11" viewBox="0 0 11 11" stroke="#707070" strokeWidth="1.500"><path d="M1 1l9 9M10 1l-9 9" /></svg>
      <svg width="13" height="11" viewBox="0 0 13 11" fill="none" stroke="#707070" strokeWidth="1.700"><path d="M1 6l4 4 7-9" /></svg>
      <svg width="14" height="14" viewBox="0 0 14 14" fill="none" stroke="#e0e0e0" strokeWidth="1.300"><path d="M7 2.500C6 .5 4.500 1 4.200 3L3 12.500c-.3 1.500-1.500 1.500-2 .8M2 5.500h4.500M7.500 6c1.500-.5 2 0 2.500 2.500s1 3 3 2.500M13 6l-5 5" /></svg>
    </FxBox>
    <FormulaInput>
      PISTON
      <Chev color="#eee" />
    </FormulaInput>
  </FormulaBar>
);

const SheetGrid = () => {
  const rows = [];
  for (let r = 1; r <= 39; r += 1) {
    const vals = DATA[r - 1] || [];
    rows.push(<RowHead key={`h${r}`} $sel={r === 10}>{r < 39 ? r : ''}</RowHead>);
    HEADS.forEach((h, c) => {
      const v = vals[c];
      rows.push(
        <Cell key={`${h}${r}`} $num={typeof v === 'number'} $sel={h === 'E' && r === 10}>{v}</Cell>,
      );
    });
  }
  return (
    <Sheet>
      <Corner>
        <svg width="13" height="13" viewBox="0 0 13 13"><path d="M13 0v13H0z" fill="#808080" /></svg>
      </Corner>
      {HEADS.map(h => <ColHead key={h} $sel={h === 'E'}>{h}</ColHead>)}
      {rows}
    </Sheet>
  );
};

const ScrollArrow = ({ d }) => (
  <svg width="9" height="7" viewBox="0 0 9 7"><path d={d} fill="#9a9a9a" /></svg>
);

const App = () => (
  <Page>
    <GlobalStyle />
    <Title />
    <RibbonPanel />
    <Formula />
    <SheetArea>
      <SheetGrid />
      <VScroll>
        <ScrollButton><ScrollArrow d="M4.500 1L9 6H0z" /></ScrollButton>
        <VThumb />
        <ScrollButton><ScrollArrow d="M4.500 6L9 1H0z" /></ScrollButton>
      </VScroll>
    </SheetArea>
    <TabBar>
      <SheetNav>
        <svg width="5" height="9" viewBox="0 0 5 9"><path d="M5 0v9L0 4.500z" fill="#8a8a8a" /></svg>
        <svg width="5" height="9" viewBox="0 0 5 9"><path d="M0 0v9l5-4.500z" fill="#b0b0b0" /></svg>
      </SheetNav>
      <SheetTab>V8_Engine_AA_demo</SheetTab>
      <AddSheet>
        <svg width="17" height="17" viewBox="0 0 17 17" fill="none" stroke="#e8e8e8"><circle cx="8.500" cy="8.500" r="7.800" /><path d="M8.500 4.500v8M4.500 8.500h8" strokeWidth="1.800" /></svg>
      </AddSheet>
      <TabDots>
        <svg width="3" height="11" viewBox="0 0 3 11" fill="#d0d0d0"><circle cx="1.500" cy="1.500" r="1" /><circle cx="1.500" cy="5.500" r="1" /><circle cx="1.500" cy="9.500" r="1" /></svg>
      </TabDots>
      <HScroll>
        <HStart><svg width="5" height="9" viewBox="0 0 5 9"><path d="M5 0v9L0 4.500z" fill="#7a7a7a" /></svg></HStart>
        <HThumb />
        <HEnd><svg width="5" height="9" viewBox="0 0 5 9"><path d="M0 0v9l5-4.500z" fill="#9a9a9a" /></svg></HEnd>
      </HScroll>
    </TabBar>
    <StatusBar>
      <Slot $w={17}><svg width="16" height="15" viewBox="0 0 16 15" fill="none" stroke="#d8d8d8"><path d="M6 11H.5V.5h13V5" /><circle cx="10" cy="10" r="3" /><path d="M10 5v2M10 13v2M5 10h2M13 10h2" /></svg></Slot>
      <StatusText $w={101} $ml={2} $fs={11.5}>Display Settings</StatusText>
      <ViewButton $on>
        <svg width="14" height="14" viewBox="0 0 14 14" fill="none" stroke="#e0e0e0"><path d="M.5.500h13v13H.5zM.5 5h13M.5 9.500h13M5 .5v13M9.500.5v13" /></svg>
      </ViewButton>
      <ViewButton>
        <svg width="14" height="14" viewBox="0 0 14 14" fill="none" stroke="#e0e0e0"><path d="M.5.500h13v13H.5zM3.500 4h7M3.500 7h7M3.500 10h7" /></svg>
      </ViewButton>
      <ViewButton>
        <svg width="14" height="14" viewBox="0 0 14 14" fill="none" stroke="#e0e0e0"><path d="M.5.500h13v13H.5zM4.500.5v6.500h5V.5" /></svg>
      </ViewButton>
      <Slot $w={10} $ml={5}><ZoomSign>−</ZoomSign></Slot>
      <ZoomSlider />
      <Slot $w={10}><ZoomSign>+</ZoomSign></Slot>
      <TitleText $w={34} $ml={14}>100%</TitleText>
    </StatusBar>
  </Page>
);

export default App;
